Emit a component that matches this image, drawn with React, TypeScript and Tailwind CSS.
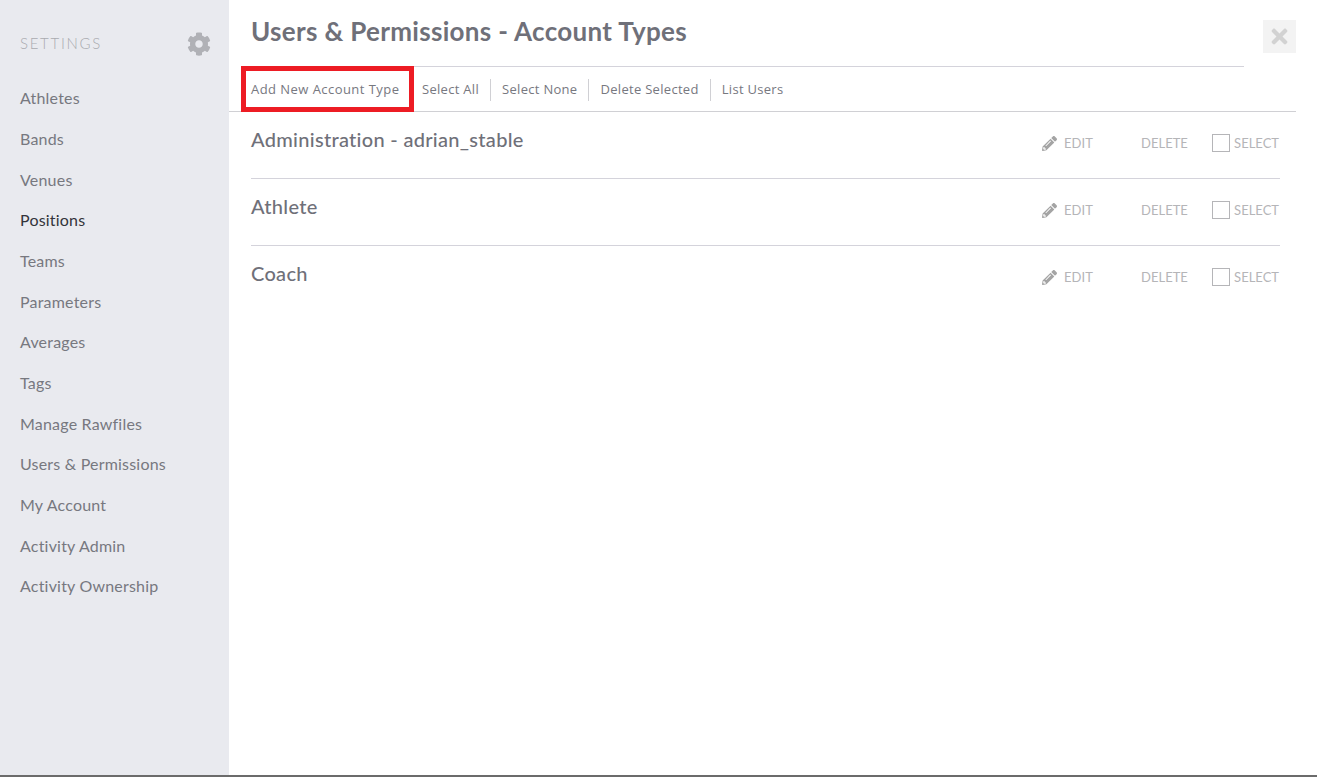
import { FaCog, FaPencilAlt, FaTimes } from 'react-icons/fa';

const menu = ['Athletes', 'Bands', 'Venues', 'Positions', 'Teams', 'Parameters', 'Averages', 'Tags', 'Manage Rawfiles', 'Users & Permissions', 'My Account', 'Activity Admin', 'Activity Ownership'];
const actions = ['Select All', 'Select None', 'Delete Selected', 'List Users'];
const accountTypes = ['Administration - adrian_stable', 'Athlete', 'Coach'];

export default function App() {
  return (
    <div className="flex h-[777px] overflow-hidden border-b-2 border-[#6b6b6b] bg-white font-['Lato','Open_Sans',sans-serif]">
      {/* Sidebar */}
      <aside className="w-[229px] shrink-0 bg-[#e9eaef] px-5 pt-[30px]">
        <div className="flex h-7 items-center justify-between">
          <span className="-translate-y-[1px] text-[15px] font-light tracking-[1.7px] text-[#a9aab0]">SETTINGS</span>
          <FaCog className="mr-[-2px] size-[24px] text-[#b0b1b6]" />
        </div>
        <nav className="mt-[27.3px] flex flex-col gap-[15.67px]">
          {menu.map(item => (
            <a key={item} className={`text-[16px] leading-[25px] tracking-[0.2px] ${item === 'Positions' ? 'text-[#33343a]' : 'text-[#77787f]'}`}>
              {item}
            </a>
          ))}
        </nav>
      </aside>

      {/* Main */}
      <main className="relative flex-1 pr-[21px]">
        <button className="absolute top-5 right-[21px] flex size-[33px] items-center justify-center bg-[#f3f3f3] text-[#d2d2d2]">
          <FaTimes className="size-[23px]" />
        </button>

        <h1 className="ml-[22px] mr-[52px] h-[67px] border-b border-[#d4d3db] pt-[12px] text-[26px] leading-[38px] font-bold tracking-[0.32px] text-[#6f7079]">
          Users &amp; Permissions - Account Types
        </h1>

        <div className="flex h-[45px] items-center border-b border-[#d0d0d4] pt-[1px] font-['Open_Sans',sans-serif] text-[13px] tracking-[0.3px] text-[#77787f]">
          <a className="ml-[12px] flex h-[46px] w-[173px] -translate-y-[1px] items-center border-[5px] border-[#ed1c24] pt-[2px] pl-[5px] tracking-[0.45px] whitespace-nowrap">
            Add New Account Type
          </a>
          <div className="ml-[-3px] flex items-center">
            {actions.map((action, i) => (
              <a key={action} className={`flex h-[22px] items-center px-[11px] whitespace-nowrap ${i < actions.length - 1 ? 'border-r border-[#d0d0d4]' : ''}`}>
                {action}
              </a>
            ))}
          </div>
        </div>

        <div className="mr-[16px] ml-[22px]">
          {accountTypes.map(name => (
            <div key={name} className="flex h-[67px] border-b border-[#d4d3db] last:border-b-0">
              <h2 className="flex-1 pt-[13px] text-[20px] leading-[28px] font-medium tracking-[0.3px] text-[#6f7079]">{name}</h2>
              <div className="flex items-start pt-[21px] text-[13px] leading-[20px] text-[#b5b5b8]">
                <FaPencilAlt className="mt-[3px] size-[15px] text-[#a4a4a4]" />
                <span className="ml-[7px] w-[77px]">EDIT</span>
                <span className="w-[71px]">DELETE</span>
                <span className="mt-[1px] size-[18px] border border-[#b5b5b8]" />
                <span className="ml-[4px] pr-[1px]">SELECT</span>
              </div>
            </div>
          ))}
        </div>
      </main>
    </div>
  );
}
